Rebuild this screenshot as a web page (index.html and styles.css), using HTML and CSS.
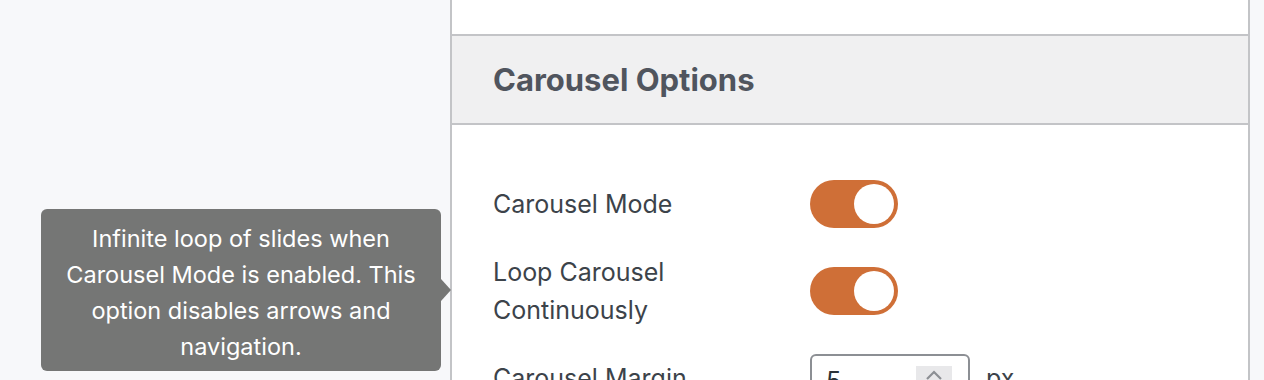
FILE: index.html
```html
<!DOCTYPE html>
<html lang="en">
<head>
<meta charset="utf-8">
<title>Carousel Options</title>
<link rel="stylesheet" href="styles.css">
</head>
<body>
<div class="page">
  <div class="gutter"></div>
  <div class="panel">
    <div class="panel-top"></div>
    <div class="panel-header">
      <h2 class="panel-title">Carousel Options</h2>
    </div>
    <div class="panel-body">
      <div class="row">
        <div class="label">Carousel Mode</div>
        <div class="control"><span class="toggle"><span class="knob"></span></span></div>
      </div>
      <div class="row">
        <div class="label">Loop Carousel<br>Continuously</div>
        <div class="control"><span class="toggle"><span class="knob"></span></span></div>
      </div>
      <div class="row">
        <div class="label">Carousel Margin</div>
        <div class="control">
          <div class="number">
            <span class="number-value">5</span>
            <span class="spin">
              <svg width="22" height="14" viewBox="0 0 22 14"><path d="M4 11 L11 4 L18 11" fill="none" stroke="#8c8f94" stroke-width="2.2"/></svg>
            </span>
          </div>
          <span class="unit">px</span>
        </div>
      </div>
    </div>
  </div>
</div>
<div class="tooltip">Infinite loop of slides when Carousel Mode is enabled. This option disables arrows and navigation.</div>
</body>
</html>
```
FILE: styles.css
```css
html, body {
  margin: 0;
  padding: 0;
  background: #f7f8fa;
  font-family: Inter, "Noto Sans", sans-serif;
  overflow: hidden;
}
.page {
  display: flex;
  height: 380px;
}
.gutter {
  width: 450px;
  flex: none;
}
.panel {
  width: 800px;
  flex: none;
  box-sizing: border-box;
  border-left: 2px solid #c3c4c7;
  border-right: 2px solid #c3c4c7;
  background: #fff;
}
.panel-top {
  height: 34px;
}
.panel-header {
  box-sizing: border-box;
  height: 91px;
  border-top: 2px solid #c3c4c7;
  border-bottom: 2px solid #c3c4c7;
  background: #f0f0f1;
  padding-left: 41px;
  display: flex;
  align-items: center;
}
.panel-title {
  margin: 0;
  font-size: 31px;
  font-weight: 700;
  color: #50555e;
}
.panel-body {
  padding: 55px 0 0 41px;
  display: flex;
  flex-direction: column;
  gap: 25px;
}
.row {
  display: flex;
  align-items: center;
}
.label {
  width: 317px;
  flex: none;
  font-size: 25px;
  line-height: 38px;
  color: #3c434a;
}
.control {
  display: flex;
  align-items: center;
  gap: 16px;
}
.toggle {
  display: flex;
  justify-content: flex-end;
  align-items: center;
  box-sizing: border-box;
  width: 88px;
  height: 48px;
  padding: 4px;
  border-radius: 24px;
  background: #cf6f37;
}
.knob {
  width: 40px;
  height: 40px;
  border-radius: 50%;
  background: #fff;
}
.number {
  box-sizing: border-box;
  width: 160px;
  height: 48px;
  border: 2px solid #8c8f94;
  border-radius: 6px;
  display: flex;
  align-items: flex-start;
  justify-content: space-between;
  padding: 10px 16px 0 14px;
}
.number-value {
  font-size: 25px;
  line-height: 30px;
  color: #2c3338;
}
.spin {
  width: 36px;
  height: 30px;
  background: #e8e8ea;
  display: flex;
  justify-content: center;
  align-items: flex-start;
  padding-top: 2px;
  box-sizing: border-box;
}
.unit {
  font-size: 25px;
  color: #3c434a;
}
.tooltip {
  position: absolute;
  left: 41px;
  top: 209px;
  width: 400px;
  height: 162px;
  box-sizing: border-box;
  padding: 12px 16px;
  background: #757675;
  border-radius: 6px;
  color: #fff;
  font-size: 23.5px;
  line-height: 36px;
  text-align: center;
}
.tooltip::after {
  content: "";
  position: absolute;
  right: -10px;
  top: 70px;
  border-left: 10px solid #757675;
  border-top: 11px solid transparent;
  border-bottom: 11px solid transparent;
}
```
